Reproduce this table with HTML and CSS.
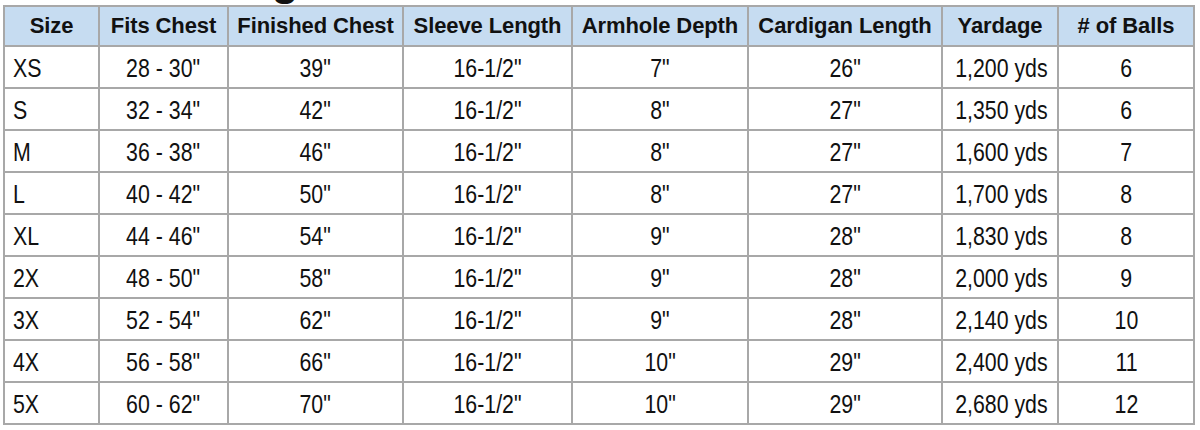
FILE: index.html
```html
<!DOCTYPE html>
<html>
<head>
<meta charset="utf-8">
<link rel="stylesheet" href="styles.css">
</head>
<body>
<div class="page">
  <h1 class="title">Sizing</h1>
  <table class="sizes">
    <colgroup>
      <col class="c1"><col class="c2"><col class="c3"><col class="c4">
      <col class="c5"><col class="c6"><col class="c7"><col class="c8">
    </colgroup>
    <thead>
      <tr>
        <th>Size</th><th>Fits Chest</th><th>Finished Chest</th><th>Sleeve Length</th>
        <th>Armhole Depth</th><th>Cardigan Length</th><th>Yardage</th><th># of Balls</th>
      </tr>
    </thead>
    <tbody>
      <tr><td class="size"><span class="n">XS</span></td><td><span class="n">28 - 30"</span></td><td><span class="n">39"</span></td><td><span class="n">16-1/2"</span></td><td><span class="n">7"</span></td><td><span class="n">26"</span></td><td><span class="n">1,200 yds</span></td><td><span class="n">6</span></td></tr>
      <tr><td class="size"><span class="n">S</span></td><td><span class="n">32 - 34"</span></td><td><span class="n">42"</span></td><td><span class="n">16-1/2"</span></td><td><span class="n">8"</span></td><td><span class="n">27"</span></td><td><span class="n">1,350 yds</span></td><td><span class="n">6</span></td></tr>
      <tr><td class="size"><span class="n">M</span></td><td><span class="n">36 - 38"</span></td><td><span class="n">46"</span></td><td><span class="n">16-1/2"</span></td><td><span class="n">8"</span></td><td><span class="n">27"</span></td><td><span class="n">1,600 yds</span></td><td><span class="n">7</span></td></tr>
      <tr><td class="size"><span class="n">L</span></td><td><span class="n">40 - 42"</span></td><td><span class="n">50"</span></td><td><span class="n">16-1/2"</span></td><td><span class="n">8"</span></td><td><span class="n">27"</span></td><td><span class="n">1,700 yds</span></td><td><span class="n">8</span></td></tr>
      <tr><td class="size"><span class="n">XL</span></td><td><span class="n">44 - 46"</span></td><td><span class="n">54"</span></td><td><span class="n">16-1/2"</span></td><td><span class="n">9"</span></td><td><span class="n">28"</span></td><td><span class="n">1,830 yds</span></td><td><span class="n">8</span></td></tr>
      <tr><td class="size"><span class="n">2X</span></td><td><span class="n">48 - 50"</span></td><td><span class="n">58"</span></td><td><span class="n">16-1/2"</span></td><td><span class="n">9"</span></td><td><span class="n">28"</span></td><td><span class="n">2,000 yds</span></td><td><span class="n">9</span></td></tr>
      <tr><td class="size"><span class="n">3X</span></td><td><span class="n">52 - 54"</span></td><td><span class="n">62"</span></td><td><span class="n">16-1/2"</span></td><td><span class="n">9"</span></td><td><span class="n">28"</span></td><td><span class="n">2,140 yds</span></td><td><span class="n">10</span></td></tr>
      <tr><td class="size"><span class="n">4X</span></td><td><span class="n">56 - 58"</span></td><td><span class="n">66"</span></td><td><span class="n">16-1/2"</span></td><td><span class="n">10"</span></td><td><span class="n">29"</span></td><td><span class="n">2,400 yds</span></td><td><span class="n">11</span></td></tr>
      <tr><td class="size"><span class="n">5X</span></td><td><span class="n">60 - 62"</span></td><td><span class="n">70"</span></td><td><span class="n">16-1/2"</span></td><td><span class="n">10"</span></td><td><span class="n">29"</span></td><td><span class="n">2,680 yds</span></td><td><span class="n">12</span></td></tr>
    </tbody>
  </table>
</div>
</body>
</html>
```
FILE: styles.css
```css
html, body {
  margin: 0;
  padding: 0;
  background: #ffffff;
}

.page {
  padding-left: 3px;
  overflow: hidden;
  height: 430px;
}

.title {
  font-family: "Liberation Sans", Arial, sans-serif;
  font-weight: bold;
  font-size: 44px;
  line-height: 44px;
  color: #111;
  margin: -42px 0 3px 166px;
}

.sizes {
  border-collapse: collapse;
  table-layout: fixed;
  width: 1190px;
  color: #111;
}

.c1 { width: 95px; }
.c2 { width: 129px; }
.c3 { width: 175px; }
.c4 { width: 169px; }
.c5 { width: 176px; }
.c6 { width: 194px; }
.c7 { width: 116px; }
.c8 { width: 136px; }

.sizes th,
.sizes td {
  border: 2px solid #a8a8a8;
  height: 38px;
  padding: 0 2px;
  text-align: center;
  vertical-align: middle;
  white-space: nowrap;
}

.sizes th {
  background: #c6dcf1;
  font-family: "Liberation Sans", Arial, sans-serif;
  font-weight: bold;
  font-size: 22px;
  letter-spacing: -0.1px;
}

.sizes td {
  font-family: "Liberation Sans", Arial, sans-serif;
  font-size: 26px;
  padding-top: 2px;
}

.n {
  display: inline-block;
  transform: scaleX(0.82);
  transform-origin: center;
}

.sizes td.size {
  text-align: left;
  padding-left: 8px;
}

.sizes td.size .n {
  transform-origin: left center;
}
```
